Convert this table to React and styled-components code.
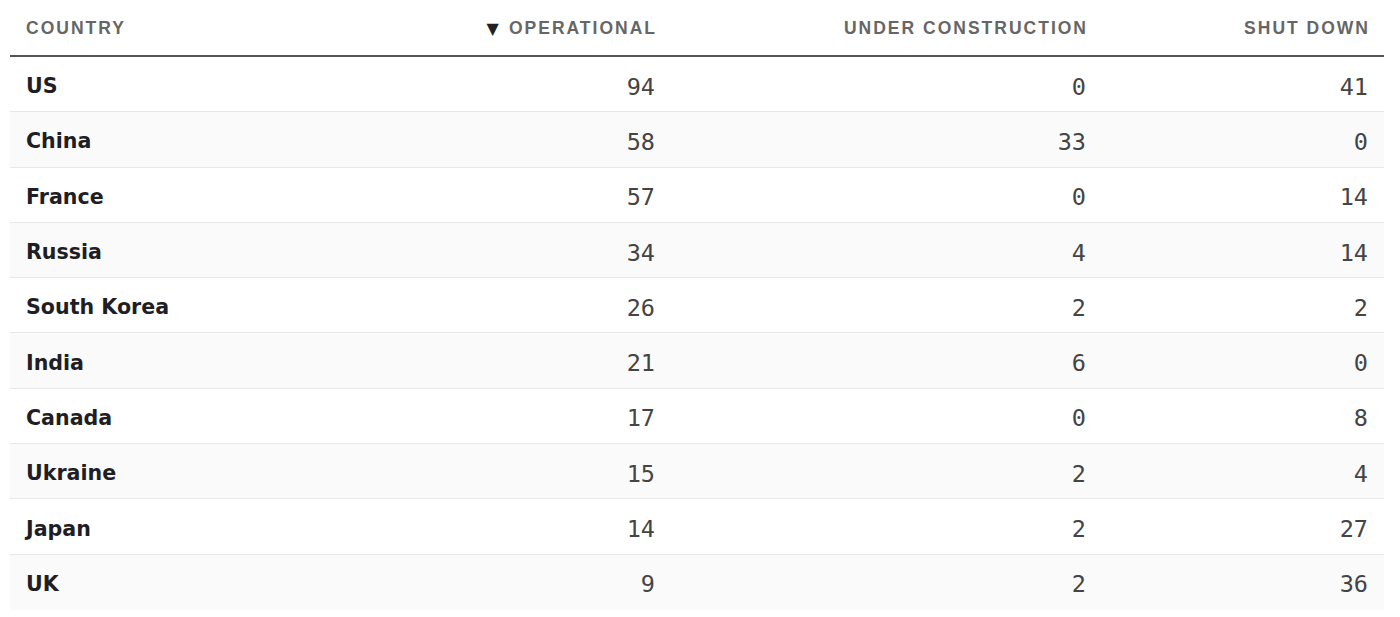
import React from "react";
import styled, { createGlobalStyle } from "styled-components";

const Global = createGlobalStyle`
  html, body { margin: 0; padding: 0; background: #ffffff; }
  body { font-family: "DejaVu Sans", sans-serif; }
  *, *::before, *::after { box-sizing: border-box; }
`;

const Wrap = styled.div`
  padding: 0 16px 0 10px;
`;

const Table = styled.div`
  display: grid;
  grid-template-columns: 370px 291px 431px 1fr;
`;

const HeadCell = styled.div`
  height: 57px;
  display: flex;
  align-items: center;
  justify-content: ${(p) => (p.$right ? "flex-end" : "flex-start")};
  padding: 2px 16px 0;
  border-bottom: 2px solid #555555;
  font-family: "Liberation Sans", Arial, sans-serif;
  font-weight: 700;
  font-size: 17.5px;
  letter-spacing: 2px;
  color: #666666;
  text-transform: uppercase;
  white-space: nowrap;
`;

const HeadLabel = styled.span`
  margin-right: -2px;
`;

const SortMark = styled.span`
  color: #222222;
  font-size: 16px;
  letter-spacing: 0;
  margin-right: 10px;
  font-family: "DejaVu Sans", sans-serif;
`;

const Row = styled.div`
  display: contents;
`;

const Cell = styled.div`
  height: 55.3px;
  display: flex;
  align-items: center;
  justify-content: ${(p) => (p.$right ? "flex-end" : "flex-start")};
  padding: 2px 16px 0;
  border-bottom: 1px solid ${(p) => (p.$last ? "transparent" : "#e8e8e8")};
  background: ${(p) => (p.$alt ? "#fafafa" : "#ffffff")};
`;

const Country = styled.span`
  font-family: "DejaVu Sans", sans-serif;
  font-weight: 700;
  font-size: 20.6px;
  color: #1e1e24;
  padding-top: 2px;
`;

const Num = styled.span`
  font-family: "DejaVu Sans Mono", monospace;
  font-size: 23.5px;
  color: #444444;
  padding-top: 3px;
`;

const data = [
  ["US", 94, 0, 41],
  ["China", 58, 33, 0],
  ["France", 57, 0, 14],
  ["Russia", 34, 4, 14],
  ["South Korea", 26, 2, 2],
  ["India", 21, 6, 0],
  ["Canada", 17, 0, 8],
  ["Ukraine", 15, 2, 4],
  ["Japan", 14, 2, 27],
  ["UK", 9, 2, 36],
];

export default function App() {
  return (
    <Wrap>
      <Global />
      <Table>
        <HeadCell>
          <HeadLabel>Country</HeadLabel>
        </HeadCell>
        <HeadCell $right>
          <SortMark>▼</SortMark>
          <HeadLabel>Operational</HeadLabel>
        </HeadCell>
        <HeadCell $right>
          <HeadLabel>Under construction</HeadLabel>
        </HeadCell>
        <HeadCell $right>
          <HeadLabel>Shut down</HeadLabel>
        </HeadCell>
        {data.map(([name, op, uc, sd], i) => {
          const alt = i % 2 === 1;
          const last = i === data.length - 1;
          return (
            <Row key={name}>
              <Cell $alt={alt} $last={last}>
                <Country>{name}</Country>
              </Cell>
              <Cell $right $alt={alt} $last={last}>
                <Num>{op}</Num>
              </Cell>
              <Cell $right $alt={alt} $last={last}>
                <Num>{uc}</Num>
              </Cell>
              <Cell $right $alt={alt} $last={last}>
                <Num>{sd}</Num>
              </Cell>
            </Row>
          );
        })}
      </Table>
    </Wrap>
  );
}
